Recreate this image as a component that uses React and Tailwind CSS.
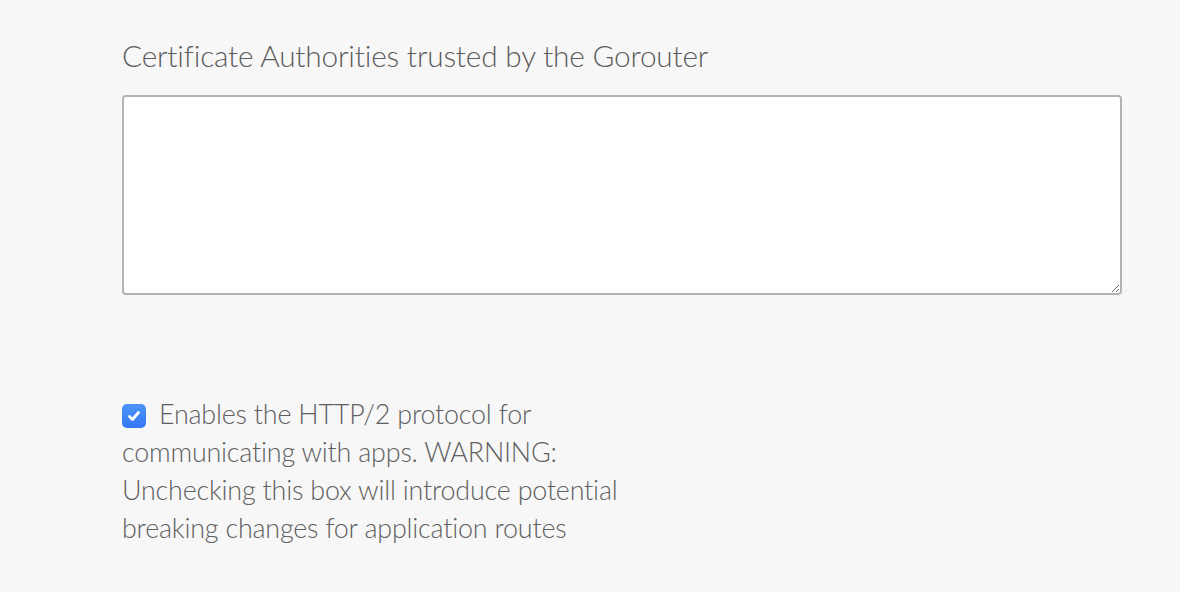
export default function App() {
  return (
    <div className="w-[1180px] h-[592px] bg-[#f7f7f7] overflow-hidden" style={{ fontFamily: "Lato, 'Noto Sans', sans-serif" }}>
      <div className="pl-[122px] pr-[58px] pt-[37px]">
        <div className="text-[29.8px] leading-[38px] font-light text-[#5c5c5c] tracking-[-0.2px]">
          Certificate Authorities trusted by the Gorouter
        </div>
        <textarea className="mt-[20px] block w-[1000px] h-[200px] bg-white border-2 border-[#b3b3b3] rounded-[4px] resize-y outline-none" defaultValue="" />
        <div className="mt-[100px] text-[26.9px] leading-[38px] font-light text-[#606060] tracking-[-0.2px]">
          <label className="inline-flex items-start align-top">
            <span className="shrink-0 flex items-center justify-center w-[24px] h-[24px] min-w-[24px] rounded-[5px] bg-gradient-to-b from-[#4d94f8] to-[#3377f5] mr-[13px] mt-[9px]">
              <svg width="16" height="16" viewBox="0 0 16 16">
                <path d="M3.5 8.5 L6.5 11.5 L12.5 4.5" fill="none" stroke="white" strokeWidth="2.8" strokeLinecap="round" strokeLinejoin="round" />
              </svg>
            </span>
            <span>Enables the HTTP/2 protocol for</span>
          </label>
          <br />
          communicating with apps. WARNING:
          <br />
          Unchecking this box will introduce potential
          <br />
          breaking changes for application routes
        </div>
      </div>
    </div>
  );
}
